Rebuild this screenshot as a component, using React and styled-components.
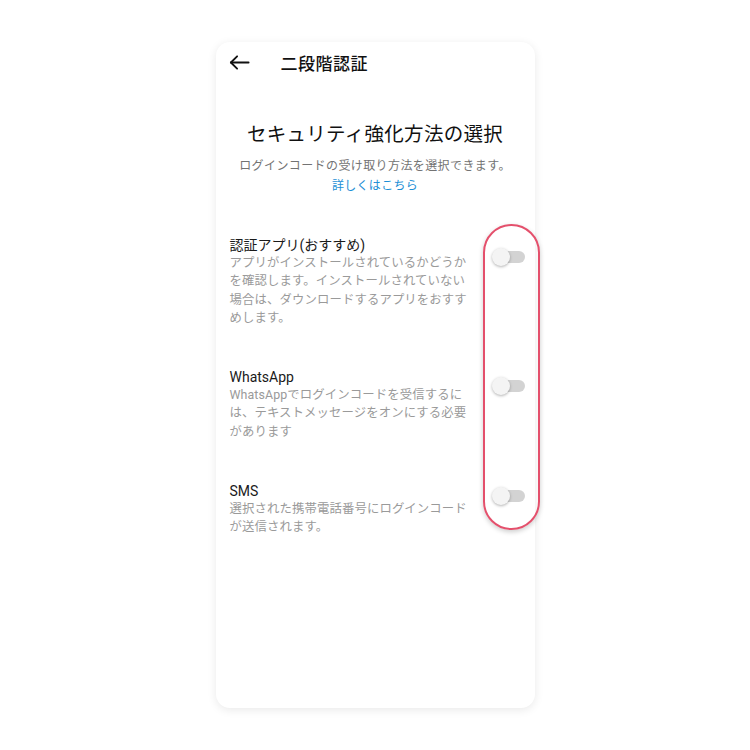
import React from 'react'
import styled, { createGlobalStyle } from 'styled-components'

const GlobalStyle = createGlobalStyle`
  html, body {
    margin: 0;
    padding: 0;
    background: #ffffff;
    font-family: Roboto, "Noto Sans CJK JP", "Noto Sans", sans-serif;
  }
`

const options = [
  {
    title: '認証アプリ(おすすめ)',
    desc: 'アプリがインストールされているかどうかを確認します。インストールされていない場合は、ダウンロードするアプリをおすすめします。',
    offset: 12,
  },
  {
    title: 'WhatsApp',
    desc: 'WhatsAppでログインコードを受信するには、テキストメッセージをオンにする必要があります',
    offset: 9,
  },
  {
    title: 'SMS',
    desc: '選択された携帯電話番号にログインコードが送信されます。',
    offset: 5,
  },
]

const App = () => {
  return (
    <>
      <GlobalStyle />
      <Page>
        <Card>
          <Header>
            <BackButton>
              <svg width="23" height="23" viewBox="0 0 24 24" fill="none" stroke="#111" strokeWidth="1.9" strokeLinecap="round" strokeLinejoin="round">
                <path d="M21.5 12H3" />
                <path d="M9.5 5.5L3 12l6.5 6.5" />
              </svg>
            </BackButton>
            <HeaderTitle>二段階認証</HeaderTitle>
          </Header>

          <Intro>
            <Heading>セキュリティ強化方法の選択</Heading>
            <Sub>ログインコードの受け取り方法を選択できます。</Sub>
            <Link>詳しくはこちら</Link>
          </Intro>

          <OptionList>
            {options.map((o) => (
              <Option key={o.title}>
                <OptionText>
                  <OptionTitle>{o.title}</OptionTitle>
                  <OptionDesc>{o.desc}</OptionDesc>
                </OptionText>
                <Toggle $offset={o.offset}>
                  <Knob />
                </Toggle>
              </Option>
            ))}
          </OptionList>

          <Highlight />
        </Card>
      </Page>
    </>
  )
}

export default App

const Page = styled.div`
  width: 750px;
  height: 750px;
  display: flex;
  justify-content: center;
  padding-top: 42px;
  box-sizing: border-box;
`

const Card = styled.div`
  position: relative;
  width: 319px;
  height: 666px;
  background: #fff;
  border-radius: 14px;
  box-shadow: 0 2px 10px rgba(0, 0, 0, 0.09);
  box-sizing: border-box;
`

const Header = styled.div`
  display: flex;
  align-items: center;
  height: 40px;
  padding: 0 0 0 12px;
`

const BackButton = styled.div`
  width: 23px;
  height: 23px;
  display: flex;
  align-items: center;
  justify-content: center;
  margin-right: 30px;
`

const HeaderTitle = styled.div`
  font-size: 17px;
  font-weight: 500;
  color: #111;
  letter-spacing: 0.5px;
`

const Intro = styled.div`
  display: flex;
  flex-direction: column;
  align-items: center;
  padding-top: 39px;
`

const Heading = styled.div`
  font-size: 19.5px;
  color: #111;
  line-height: 28px;
  letter-spacing: 0.3px;
`

const Sub = styled.div`
  margin-top: 8px;
  font-size: 12px;
  line-height: 18px;
  color: #737373;
  letter-spacing: 0.4px;
`

const Link = styled.div`
  margin-top: 2px;
  font-size: 12px;
  line-height: 18px;
  color: #1d8fd6;
  letter-spacing: 0.3px;
`

const OptionList = styled.div`
  display: flex;
  flex-direction: column;
  gap: 41px;
  padding: 41px 0 0 14px;
`

const Option = styled.div`
  display: flex;
  align-items: flex-start;
`

const OptionText = styled.div`
  width: 238px;
  display: flex;
  flex-direction: column;
`

const OptionTitle = styled.div`
  font-size: 14px;
  line-height: 18px;
  color: #1a1a1a;
`

const OptionDesc = styled.div`
  font-size: 12.4px;
  line-height: 18.3px;
  color: #9a9a9a;
  letter-spacing: 0.1px;
`

const Toggle = styled.div`
  position: relative;
  margin-top: ${(p) => p.$offset + 3}px;
  margin-left: 28px;
  width: 29px;
  height: 12px;
  border-radius: 6px;
  background: #d3d3d3;
`

const Knob = styled.div`
  position: absolute;
  left: -4px;
  top: -3px;
  width: 18px;
  height: 18px;
  border-radius: 50%;
  background: #f4f4f4;
  box-shadow: 0 1px 3px rgba(0, 0, 0, 0.3);
`

const Highlight = styled.div`
  position: absolute;
  left: 267px;
  top: 182px;
  width: 57px;
  height: 306px;
  box-sizing: border-box;
  border: 2.5px solid #e4506c;
  border-radius: 29px;
  box-shadow: 0 2px 5px rgba(0, 0, 0, 0.2);
`
